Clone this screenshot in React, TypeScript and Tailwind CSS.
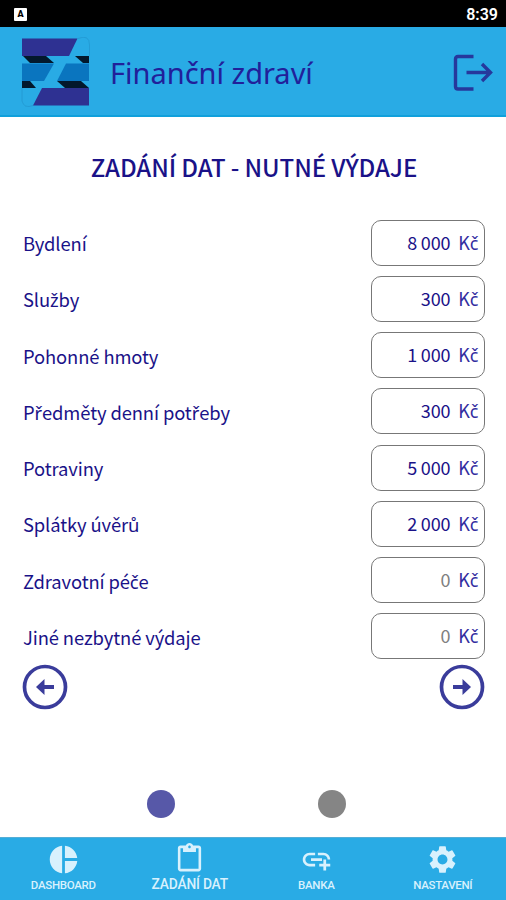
import { MdAddLink, MdContentPaste, MdPieChart, MdSettings } from 'react-icons/md';

interface Expense {
  label: string;
  value: string;
}

const expenses: Expense[] = [
  { label: 'Bydlení', value: '8 000' },
  { label: 'Služby', value: '300' },
  { label: 'Pohonné hmoty', value: '1 000' },
  { label: 'Předměty denní potřeby', value: '300' },
  { label: 'Potraviny', value: '5 000' },
  { label: 'Splátky úvěrů', value: '2 000' },
  { label: 'Zdravotní péče', value: '0' },
  { label: 'Jiné nezbytné výdaje', value: '0' },
];

const tabs = [
  { label: 'DASHBOARD', icon: MdPieChart, active: false },
  { label: 'ZADÁNÍ DAT', icon: MdContentPaste, active: true },
  { label: 'BANKA', icon: MdAddLink, active: false },
  { label: 'NASTAVENÍ', icon: MdSettings, active: false },
];

// The CJK family has no glyphs for these letters, so they come from Noto Sans
function CzechText({ text }: { text: string }) {
  return (
    <>
      {text.split(/([čřž])/).map((part, idx) =>
        /^[čřž]$/.test(part) ? (
          <span key={idx} className="font-['Noto_Sans',sans-serif] leading-none">{part}</span>
        ) : (
          part
        )
      )}
    </>
  );
}

function Logo() {
  return (
    <svg width="70" height="70" viewBox="0 0 70 70" className="mt-[2px] shrink-0">
      <path d="M57 1.500Q68.500 -3 68.500 8V19M1 51V64Q3 72 12 68.500" fill="none" stroke="#2398d0" strokeWidth="0.8" />
      <path d="M1 1.500H56.500L48 19H1Z" fill="#2e3192" />
      <path d="M2 19H25L33 26H9Z" fill="#03182c" />
      <path d="M54 19H68V26H62Z" fill="#03182c" />
      <path d="M1 26.500H33L23 44H1Z" fill="#0a75bf" />
      <path d="M45 26.500H68V44H36Z" fill="#0a75bf" />
      <path d="M1 44H9L15 51H1Z" fill="#03182c" />
      <path d="M36 44H60L68 51H44Z" fill="#03182c" />
      <path d="M21 51H68V68.500H12Z" fill="#2e3192" />
    </svg>
  );
}

function LogoutIcon() {
  return (
    <svg width="40" height="38" viewBox="0 0 40 38" fill="none" stroke="#26389c" strokeWidth="3.400">
      <path d="M20.500 2.500H5Q2.500 2.500 2.500 5V32.500Q2.500 35 5 35H20.500" />
      <path d="M13.500 18.500H37.500M29 10L37.500 18.500L29 27" />
    </svg>
  );
}

function ArrowButton({ back = false }: { back?: boolean }) {
  return (
    <button type="button" aria-label={back ? 'Zpět' : 'Další'}>
      <svg width="46" height="46" viewBox="0 0 46 46" className={back ? 'rotate-180' : ''}>
        <circle cx="23" cy="23" r="20.500" fill="none" stroke="#3a3c9b" strokeWidth="3.700" />
        <path d="M14 21H23.500V15L32 23L23.500 31V25H14Z" fill="#3a3c9b" />
      </svg>
    </button>
  );
}

export default function App() {
  return (
    <div className="flex h-[900px] w-[506px] flex-col overflow-hidden bg-white font-['Noto_Sans_CJK_SC','Noto_Sans',sans-serif] text-[#1a1288]">
      {/* Status bar */}
      <div className="flex h-[27px] shrink-0 items-center justify-between bg-black pr-2 pl-3.5 font-[Roboto,sans-serif] text-white">
        <span className="mt-0.5 flex h-[13px] w-[13px] items-center justify-center rounded-[1px] bg-white text-[9px] font-black text-black">
          A
        </span>
        <span className="mt-0.5 text-[16px] font-semibold">8:39</span>
      </div>

      {/* Header */}
      <header className="flex h-[90px] shrink-0 items-center border-b-2 border-[#10a0db] bg-[#29abe5] pr-[13px] pl-[21px]">
        <Logo />
        <h1 className="mt-[3px] ml-[19px] font-['Noto_Sans',sans-serif] text-[29px] text-[#21209a]">
          Finanční zdraví
        </h1>
        <button type="button" aria-label="Odhlásit" className="mt-[4px] ml-auto">
          <LogoutIcon />
        </button>
      </header>

      <main className="flex flex-1 flex-col">
        <h2 className="mt-[32px] h-[36px] pl-[2px] text-center text-[24px] leading-[36px] font-medium tracking-[-0.1px]">
          ZADÁNÍ DAT - NUTNÉ VÝDAJE
        </h2>

        <div className="mt-[34.500px] flex flex-col gap-[10.250px] pr-[21.500px] pl-[23px]">
          {expenses.map((item) => (
            <label key={item.label} className="flex h-[46px] items-center justify-between">
              <span className="mt-px text-[18.400px] leading-[28px] tracking-[-0.12px] whitespace-nowrap">
                <CzechText text={item.label} />
              </span>
              <span className="flex h-[46px] w-[113.500px] items-center justify-end gap-2 rounded-[10px] border border-[#777] pr-[5px] pb-[2px] text-[18px] leading-[28px] whitespace-nowrap">
                <span className={item.value === '0' ? 'tracking-[-0.2px] text-[#808080]' : 'tracking-[-0.2px]'}>
                  {item.value}
                </span>
                <span className="text-[#332da0]">
                  <CzechText text="Kč" />
                </span>
              </span>
            </label>
          ))}
        </div>

        <div className="mt-[5px] flex justify-between pr-[21px] pl-[22px]">
          <ArrowButton back />
          <ArrowButton />
        </div>

        {/* Page dots */}
        <div className="mt-[80px] flex justify-center gap-[143px] pr-[13px]">
          <span className="h-[28px] w-[28px] rounded-full bg-[#5758a8]" />
          <span className="h-[28px] w-[28px] rounded-full bg-[#858585]" />
        </div>
      </main>

      {/* Bottom navigation */}
      <nav className="grid h-[63px] shrink-0 grid-cols-4 border-t border-[#55aed6] bg-[#29abe5] font-[Roboto,sans-serif] text-[#d8f1fd]">
        {tabs.map(({ label, icon: Icon, active }) => (
          <div key={label} className="flex flex-col items-center pt-[5px]">
            <Icon size={active ? 31 : 33} />
            <span
              className={
                active
                  ? 'text-[13.800px] leading-[21px] font-medium tracking-[-0.2px] whitespace-nowrap'
                  : 'text-[11.500px] leading-[19px] font-medium tracking-[-0.3px] whitespace-nowrap'
              }
            >
              {label}
            </span>
          </div>
        ))}
      </nav>
    </div>
  );
}
